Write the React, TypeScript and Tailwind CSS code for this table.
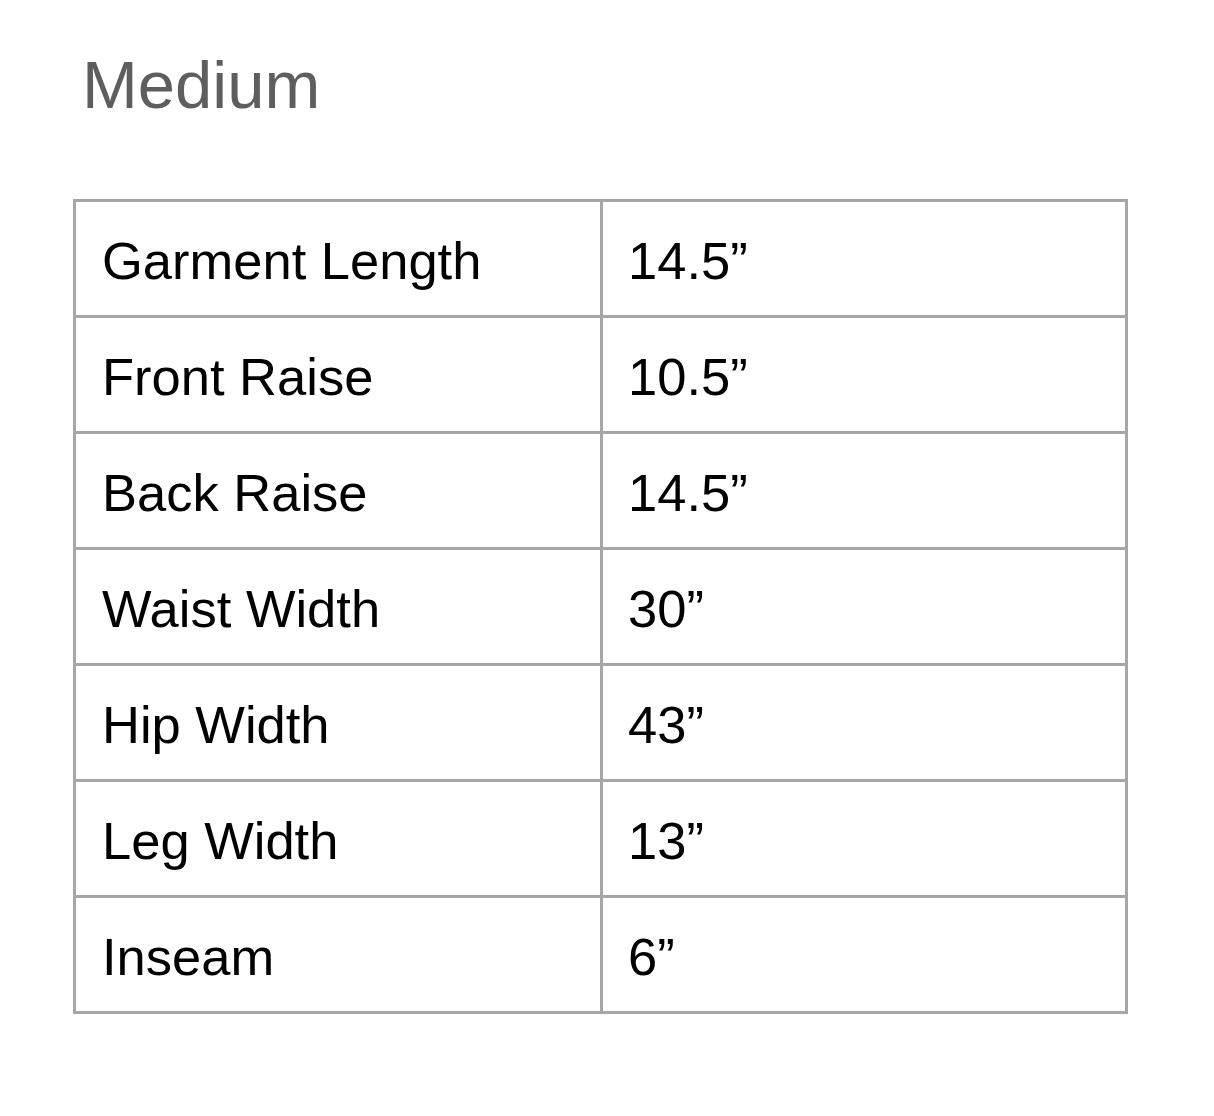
import React from 'react';

interface Row {
  label: string;
  value: string;
}

const rows: Row[] = [
  { label: 'Garment Length', value: '14.5\u201D' },
  { label: 'Front Raise', value: '10.5\u201D' },
  { label: 'Back Raise', value: '14.5\u201D' },
  { label: 'Waist Width', value: '30\u201D' },
  { label: 'Hip Width', value: '43\u201D' },
  { label: 'Leg Width', value: '13\u201D' },
  { label: 'Inseam', value: '6\u201D' },
];

const App: React.FC = () => {
  return (
    <div
      className="w-[1214px] h-[1116px] bg-white"
      style={{ fontFamily: '"Liberation Sans", Arial, sans-serif' }}
    >
      <h1 className="pt-[51px] pl-[82px] text-[67px] leading-none font-normal text-[#5e5e5e]">
        Medium
      </h1>

      <div className="mt-[81px] ml-[73px] grid w-[1055px] grid-cols-[527px_525px] border-t-[3px] border-l-[3px] border-[#a6a6a6]">
        {rows.map((row) => (
          <React.Fragment key={row.label}>
            <div className="flex h-[116px] items-center border-r-[3px] border-b-[3px] border-[#a6a6a6] pt-[6px] pl-[26px] text-[52.5px] leading-none text-black">
              {row.label}
            </div>
            <div className="flex h-[116px] items-center border-r-[3px] border-b-[3px] border-[#a6a6a6] pt-[6px] pl-[25px] text-[52.5px] leading-none text-black">
              {row.value}
            </div>
          </React.Fragment>
        ))}
      </div>
    </div>
  );
};

export default App;
